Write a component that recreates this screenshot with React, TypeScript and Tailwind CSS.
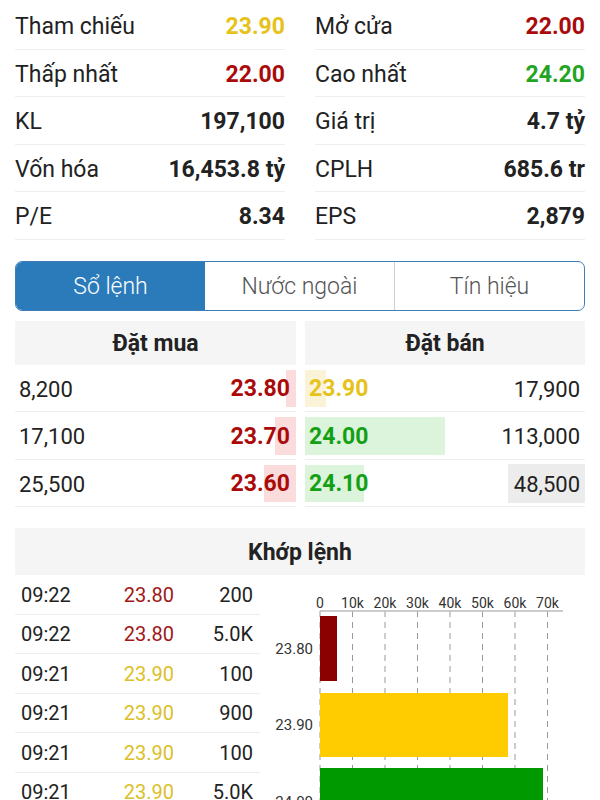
import React from 'react';

const stats: [string, string, string, string, string, string][] = [
    ['Tham chiếu', '23.90', 'text-[#e6c21a]', 'Mở cửa', '22.00', 'text-[#aa0a0a]'],
    ['Thấp nhất', '22.00', 'text-[#aa0a0a]', 'Cao nhất', '24.20', 'text-[#1fa51f]'],
    ['KL', '197,100', 'text-[#222]', 'Giá trị', '4.7 tỷ', 'text-[#222]'],
    ['Vốn hóa', '16,453.8 tỷ', 'text-[#222]', 'CPLH', '685.6 tr', 'text-[#222]'],
    ['P/E', '8.34', 'text-[#222]', 'EPS', '2,879', 'text-[#222]'],
];

const book = [
    { bv: '8,200', bp: '23.80', bw: 10, sp: '23.90', sw: 21, sv: '17,900', sc: 'text-[#e6c21a]', sbg: 'bg-[#fbf3d8]', hl: false },
    { bv: '17,100', bp: '23.70', bw: 21, sp: '24.00', sw: 140, sv: '113,000', sc: 'text-[#14a014]', sbg: 'bg-[#dcf3dc]', hl: false },
    { bv: '25,500', bp: '23.60', bw: 32, sp: '24.10', sw: 59, sv: '48,500', sc: 'text-[#14a014]', sbg: 'bg-[#dcf3dc]', hl: true },
];

const trades = [
    ['09:22', '23.80', '200', 'text-[#a01818]'],
    ['09:22', '23.80', '5.0K', 'text-[#a01818]'],
    ['09:21', '23.90', '100', 'text-[#dcc028]'],
    ['09:21', '23.90', '900', 'text-[#dcc028]'],
    ['09:21', '23.90', '100', 'text-[#dcc028]'],
    ['09:21', '23.90', '5.0K', 'text-[#dcc028]'],
];

const ticks = ['0', '10k', '20k', '30k', '40k', '50k', '60k', '70k'];

// Horizontal volume-by-price chart
const VolumeChart = () => (
    <svg width="340" height="225" className="block">
        {ticks.map((t, i) => {
            const x = 60 + i * 32.5;
            return (
                <g key={t}>
                    <text x={x} y="33" textAnchor="middle" fontSize="14" fill="#333" fontFamily="Roboto, sans-serif">
                        {t}
                    </text>
                    <line x1={x} y1="36" x2={x} y2="225" stroke="#9a9a9a" strokeWidth="1" strokeDasharray="6 5" />
                </g>
            );
        })}
        <line x1="60" y1="36" x2="303" y2="36" stroke="#bbb" strokeWidth="1.5" />
        <rect x="60" y="41" width="17" height="65" fill="#8b0000" />
        <rect x="60" y="118" width="188" height="64" fill="#ffcc00" />
        <rect x="60" y="193" width="223" height="40" fill="#009900" />
        <text x="53" y="79" textAnchor="end" fontSize="15" fill="#333" fontFamily="Roboto, sans-serif">23.80</text>
        <text x="53" y="155" textAnchor="end" fontSize="15" fill="#333" fontFamily="Roboto, sans-serif">23.90</text>
        <text x="53" y="232" textAnchor="end" fontSize="15" fill="#333" fontFamily="Roboto, sans-serif">24.00</text>
    </svg>
);

export default function App() {
    return (
        <div className="w-[600px] h-[800px] overflow-hidden bg-white text-[#222] font-['Roboto','Noto_Sans',sans-serif]">
            {/* Stats grid */}
            <div className="flex gap-[30px] px-[15px] pt-[2px]">
                {[0, 1].map((col) => (
                    <div key={col} className="w-[270px]">
                        {stats.map((s) => (
                            <div key={s[col * 3]} className="h-[47.5px] pt-[4px] flex items-center justify-between border-b border-[#eeeeee] text-[23px]">
                                <span>{s[col * 3]}</span>
                                <span className={`font-bold ${s[col * 3 + 2]}`}>{s[col * 3 + 1]}</span>
                            </div>
                        ))}
                    </div>
                ))}
            </div>

            {/* Tabs */}
            <div className="mx-[15px] mt-[21px] h-[50px] flex rounded-[7px] border border-[#3f7fb9] overflow-hidden text-[23px] font-light">
                <div className="flex-1 flex items-center justify-center pt-[3px] bg-[#2b7bba] text-white">Sổ lệnh</div>
                <div className="flex-1 flex items-center justify-center pt-[3px] text-[#555]">Nước ngoài</div>
                <div className="flex-1 flex items-center justify-center pt-[3px] text-[#555] border-l border-[#cfcfcf]">Tín hiệu</div>
            </div>

            {/* Order book */}
            <div className="flex gap-[9px] px-[15px] mt-[10px]">
                <div className="w-[281px]">
                    <div className="h-[44px] pt-[3px] bg-[#f5f5f5] flex items-center justify-center font-bold text-[23px]">Đặt mua</div>
                    {book.map((r) => (
                        <div key={r.bv} className="relative h-[47.5px] pt-[3px] border-b border-[#eeeeee] flex items-center justify-between text-[22px]">
                            <div className="absolute right-0 top-[5px] bottom-[4px] bg-[#fbdcdc]" style={{ width: r.bw }} />
                            <span className="relative pl-[4px]">{r.bv}</span>
                            <span className="relative pr-[6px] font-bold text-[23px] text-[#aa0a0a]">{r.bp}</span>
                        </div>
                    ))}
                </div>
                <div className="w-[280px]">
                    <div className="h-[44px] pt-[3px] bg-[#f5f5f5] flex items-center justify-center font-bold text-[23px]">Đặt bán</div>
                    {book.map((r) => (
                        <div key={r.sv} className="relative h-[47.5px] pt-[3px] border-b border-[#eeeeee] flex items-center justify-between text-[22px]">
                            <div className={`absolute left-0 top-[5px] bottom-[4px] ${r.sbg}`} style={{ width: r.sw }} />
                            {r.hl && <div className="absolute right-0 top-[4px] bottom-[3px] w-[77px] bg-[#ececec]" />}
                            <span className={`relative pl-[4px] font-bold text-[23px] ${r.sc}`}>{r.sp}</span>
                            <span className="relative pr-[5px]">{r.sv}</span>
                        </div>
                    ))}
                </div>
            </div>

            {/* Matched orders */}
            <div className="mx-[15px] mt-[21px] h-[47px] pt-[3px] bg-[#f5f5f5] flex items-center justify-center font-bold text-[23px]">
                Khớp lệnh
            </div>
            <div className="flex">
                <div className="w-[245px] ml-[15px]">
                    {trades.map((t, i) => (
                        <div key={i} className="h-[39.5px] pt-[1px] flex items-center border-b border-[#eeeeee] text-[20px]">
                            <span className="w-[95px] pl-[6px]">{t[0]}</span>
                            <span className={`w-[64px] text-right ${t[3]}`}>{t[1]}</span>
                            <span className="w-[79px] text-right">{t[2]}</span>
                        </div>
                    ))}
                </div>
                <VolumeChart />
            </div>
        </div>
    );
}
